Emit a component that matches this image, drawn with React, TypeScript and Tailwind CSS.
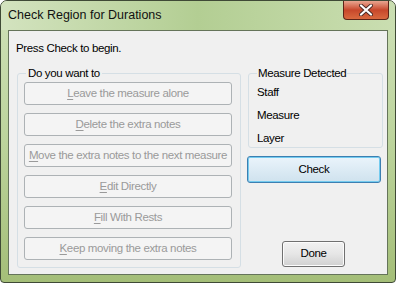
import React from 'react';

const font = { fontFamily: '"Liberation Sans", Arial, sans-serif' };

const options: { key: string; rest: string }[] = [
  { key: 'L', rest: 'eave the measure alone' },
  { key: 'D', rest: 'elete the extra notes' },
  { key: 'M', rest: 'ove the extra notes to the next measure' },
  { key: 'E', rest: 'dit Directly' },
  { key: 'F', rest: 'ill With Rests' },
  { key: 'K', rest: 'eep moving the extra notes' },
];

const DisabledButton: React.FC<{ k: string; rest: string }> = ({ k, rest }) => (
  <button
    disabled
    className="w-[208px] h-[23px] rounded-[3px] border border-[#adb2b5] bg-[#f4f4f4] text-[#9a9a9a] text-[11.5px] tracking-[-0.35px] flex items-center justify-center"
  >
    <span className="underline underline-offset-[2px]">{k}</span>
    {rest}
  </button>
);

const App: React.FC = () => {
  return (
    <div className="w-[396px] h-[283px] bg-white" style={font}>
      <div className="w-[396px] h-[283px] rounded-t-[7px] rounded-b-[4px] border border-[#3f4a36] bg-gradient-to-b from-[#cfe1b8] via-[#bcd49c] to-[#a4be78] flex flex-col">
        {/* title bar */}
        <div className="h-[29px] flex items-start justify-between rounded-t-[6px] bg-gradient-to-r from-[#d3e3bf] via-[#b3ce93] to-[#cadeb1]">
          <div className="pl-[7px] pt-[7px] text-[12.5px] text-[#111] leading-[15px]">Check Region for Durations</div>
          <div className="mr-[6px] w-[46px] h-[19px] rounded-b-[4px] border border-t-0 border-[#5c2418] bg-gradient-to-b from-[#e8a590] via-[#c7472b] to-[#d9693f] flex items-center justify-center">
            <svg width="14" height="12" viewBox="0 0 14 12">
              <path d="M2 1.5 L12 10.5 M12 1.5 L2 10.5" stroke="#4a2a24" strokeWidth="4" strokeLinecap="round" />
              <path d="M2 1.5 L12 10.5 M12 1.5 L2 10.5" stroke="#ffffff" strokeWidth="2.2" strokeLinecap="round" />
            </svg>
          </div>
        </div>

        {/* client area */}
        <div className="mx-[7px] h-[245px] border border-[#65745a] bg-[#f0f0f0] flex flex-col text-[11.5px] text-black">
          <div className="ml-[7px] mt-[10px] leading-[14px] tracking-[-0.35px]">Press Check to begin.</div>

          <div className="flex mt-[12px] ml-[8px] gap-[6px]">
            <fieldset className="w-[224px] h-[201px] border border-[#d5dfe5] rounded-[3px] px-[6px] flex flex-col">
              <legend className="ml-[2px] px-[2px] leading-[13px] tracking-[-0.35px]">Do you want to</legend>
              <div className="flex flex-col gap-[8px] mt-[2px]">
                {options.map((o) => (
                  <DisabledButton key={o.key} k={o.key} rest={o.rest} />
                ))}
              </div>
            </fieldset>

            <div className="flex flex-col">
              <fieldset className="w-[135px] h-[81px] border border-[#d5dfe5] rounded-[3px] pl-[8px] ml-[1px]">
                <legend className="px-[1px] leading-[13px] tracking-[-0.35px]">Measure Detected</legend>
                <div className="flex flex-col tracking-[-0.35px] leading-[14px] gap-[9px] mt-[5px]">
                  <span>Staff</span>
                  <span>Measure</span>
                  <span>Layer</span>
                </div>
              </fieldset>

              <button className="mt-[8px] w-[134px] h-[27px] rounded-[3px] border border-[#3c7fb1] bg-gradient-to-b from-[#eaf4fb] to-[#cfe2ee] shadow-[inset_0_0_0_1px_#74cbef] text-[11.5px] text-black tracking-[-0.35px]">
                Check
              </button>

              <button className="mt-[58px] ml-[35px] w-[63px] h-[26px] rounded-[3px] border border-[#707070] bg-gradient-to-b from-[#f2f2f2] via-[#e6e6e6] to-[#d0d0d0] shadow-[inset_0_0_0_1px_#fcfcfc] text-[11.5px] text-black tracking-[-0.35px]">
                Done
              </button>
            </div>
          </div>
        </div>
      </div>
    </div>
  );
};

export default App;
